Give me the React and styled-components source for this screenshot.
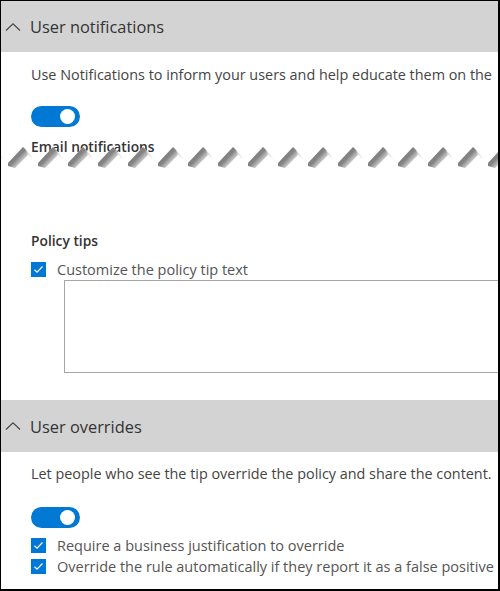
import React from 'react';
import styled, { createGlobalStyle } from 'styled-components';

const GlobalStyle = createGlobalStyle`
  html, body {
    margin: 0;
    padding: 0;
    background: #fff;
  }
  body {
    font-family: "Open Sans", "Noto Sans", Arial, sans-serif;
    color: #333;
  }
`;

const Frame = styled.div`
  position: relative;
  box-sizing: border-box;
  width: 500px;
  height: 591px;
  border-top: 1px solid #000;
  border-left: 1px solid #000;
  border-right: 2px solid #000;
  border-bottom: 2px solid #000;
  overflow: hidden;
  background: #fff;
`;

const SectionHeader = styled.div`
  display: flex;
  align-items: center;
  gap: 9px;
  height: ${(p) => p.$height}px;
  margin-top: ${(p) => p.$top || 0}px;
  padding-left: 4px;
  background: #d3d3d3;
  font-size: 16.4px;
  color: #333;
`;

const Body = styled.div`
  padding-left: 30px;
`;

const Description = styled.p`
  margin: 0;
  white-space: nowrap;
  font-size: 14.4px;
  line-height: 20px;
  color: #444;
  padding-top: ${(p) => p.$top}px;
`;

const Toggle = styled.div`
  position: relative;
  box-sizing: border-box;
  width: 49px;
  height: 21px;
  border-radius: 11px;
  background: #0078d4;
  margin-top: ${(p) => p.$top}px;

  &::after {
    content: '';
    position: absolute;
    right: 5px;
    top: 3px;
    width: 15px;
    height: 15px;
    border-radius: 50%;
    background: #fff;
  }
`;

const SubHeading = styled.div`
  font-size: 13.8px;
  font-weight: 600;
  color: #333;
  margin-top: ${(p) => p.$top}px;
  line-height: 18px;
`;

const CheckRow = styled.div`
  display: flex;
  align-items: center;
  gap: 11px;
  height: 20px;
  margin-top: ${(p) => p.$top || 0}px;
  font-size: 14.5px;
  color: #555;
  white-space: nowrap;
`;

const Box = styled.span`
  display: inline-flex;
  align-items: center;
  justify-content: center;
  width: 15px;
  height: 15px;
  flex: none;
  background: #0078d4;
`;

const TextBox = styled.div`
  box-sizing: border-box;
  margin-top: 1px;
  margin-left: 33px;
  width: 480px;
  height: 93px;
  border: 1px solid #a6a6a6;
`;

const Tear = styled.svg`
  position: absolute;
  left: 0;
  top: 140px;
`;

const Chevron = () => (
  <svg width="16" height="10" viewBox="0 0 16 10">
    <polyline points="1,8.5 8,1.8 15,8.5" fill="none" stroke="#444" strokeWidth="1.1" />
  </svg>
);

const Check = () => (
  <svg width="11" height="9" viewBox="0 0 11 9">
    <polyline points="1.5,4.8 4,7.2 9.5,1.5" fill="none" stroke="#fff" strokeWidth="1.2" />
  </svg>
);

const CheckItem = ({ label, top }) => (
  <CheckRow $top={top}>
    <Box>
      <Check />
    </Box>
    <span>{label}</span>
  </CheckRow>
);

const TornEdge = () => {
  const peaks = [];
  for (let x = -8; x < 520; x += 30) peaks.push(x);
  const line = peaks.map((p) => `${p - 15},22 ${p},6`).join(' ');
  return (
    <Tear width="500" height="40" viewBox="0 0 500 40">
      <defs>
        <linearGradient id="rise" x1="0" y1="0" x2="1" y2="1">
          <stop offset="0" stopColor="#6a6a6a" />
          <stop offset="0.5" stopColor="#858585" />
          <stop offset="1" stopColor="#e6e6e6" stopOpacity="0" />
        </linearGradient>
        <linearGradient id="fall" x1="0" y1="0" x2="1" y2="0">
          <stop offset="0" stopColor="#8a8a8a" />
          <stop offset="1" stopColor="#ffffff" stopOpacity="0" />
        </linearGradient>
      </defs>
      <polygon points={`-30,40 ${line} 530,40`} fill="#fff" />
      {peaks.map((p) => (
        <g key={p}>
          <polygon
            points={`${p - 15},22 ${p},6 ${p + 3},9 ${p + 5},14 ${p - 8},27 ${p - 15},25`}
            fill="url(#rise)"
          />
          <polygon points={`${p},6 ${p + 3},9 ${p + 13},20 ${p + 8},17`} fill="url(#fall)" />
        </g>
      ))}
    </Tear>
  );
};

export default function App() {
  return (
    <>
      <GlobalStyle />
      <Frame>
        <SectionHeader $height={51}>
          <Chevron />
          <span>User notifications</span>
        </SectionHeader>
        <Body>
          <Description $top={13}>
            Use Notifications to inform your users and help educate them on the
          </Description>
          <Toggle $top={21} />
          <SubHeading $top={11}>Email notifications</SubHeading>
          <SubHeading $top={76}>Policy tips</SubHeading>
          <CheckItem label="Customize the policy tip text" top={9} />
          <TextBox />
        </Body>
        <SectionHeader $height={52} $top={27}>
          <Chevron />
          <span>User overrides</span>
        </SectionHeader>
        <Body>
          <Description $top={12}>
            Let people who see the tip override the policy and share the content.
          </Description>
          <Toggle $top={23} />
          <CheckItem label="Require a business justification to override" top={7} />
          <CheckItem label="Override the rule automatically if they report it as a false positive" top={1} />
        </Body>
        <TornEdge />
      </Frame>
    </>
  );
}
